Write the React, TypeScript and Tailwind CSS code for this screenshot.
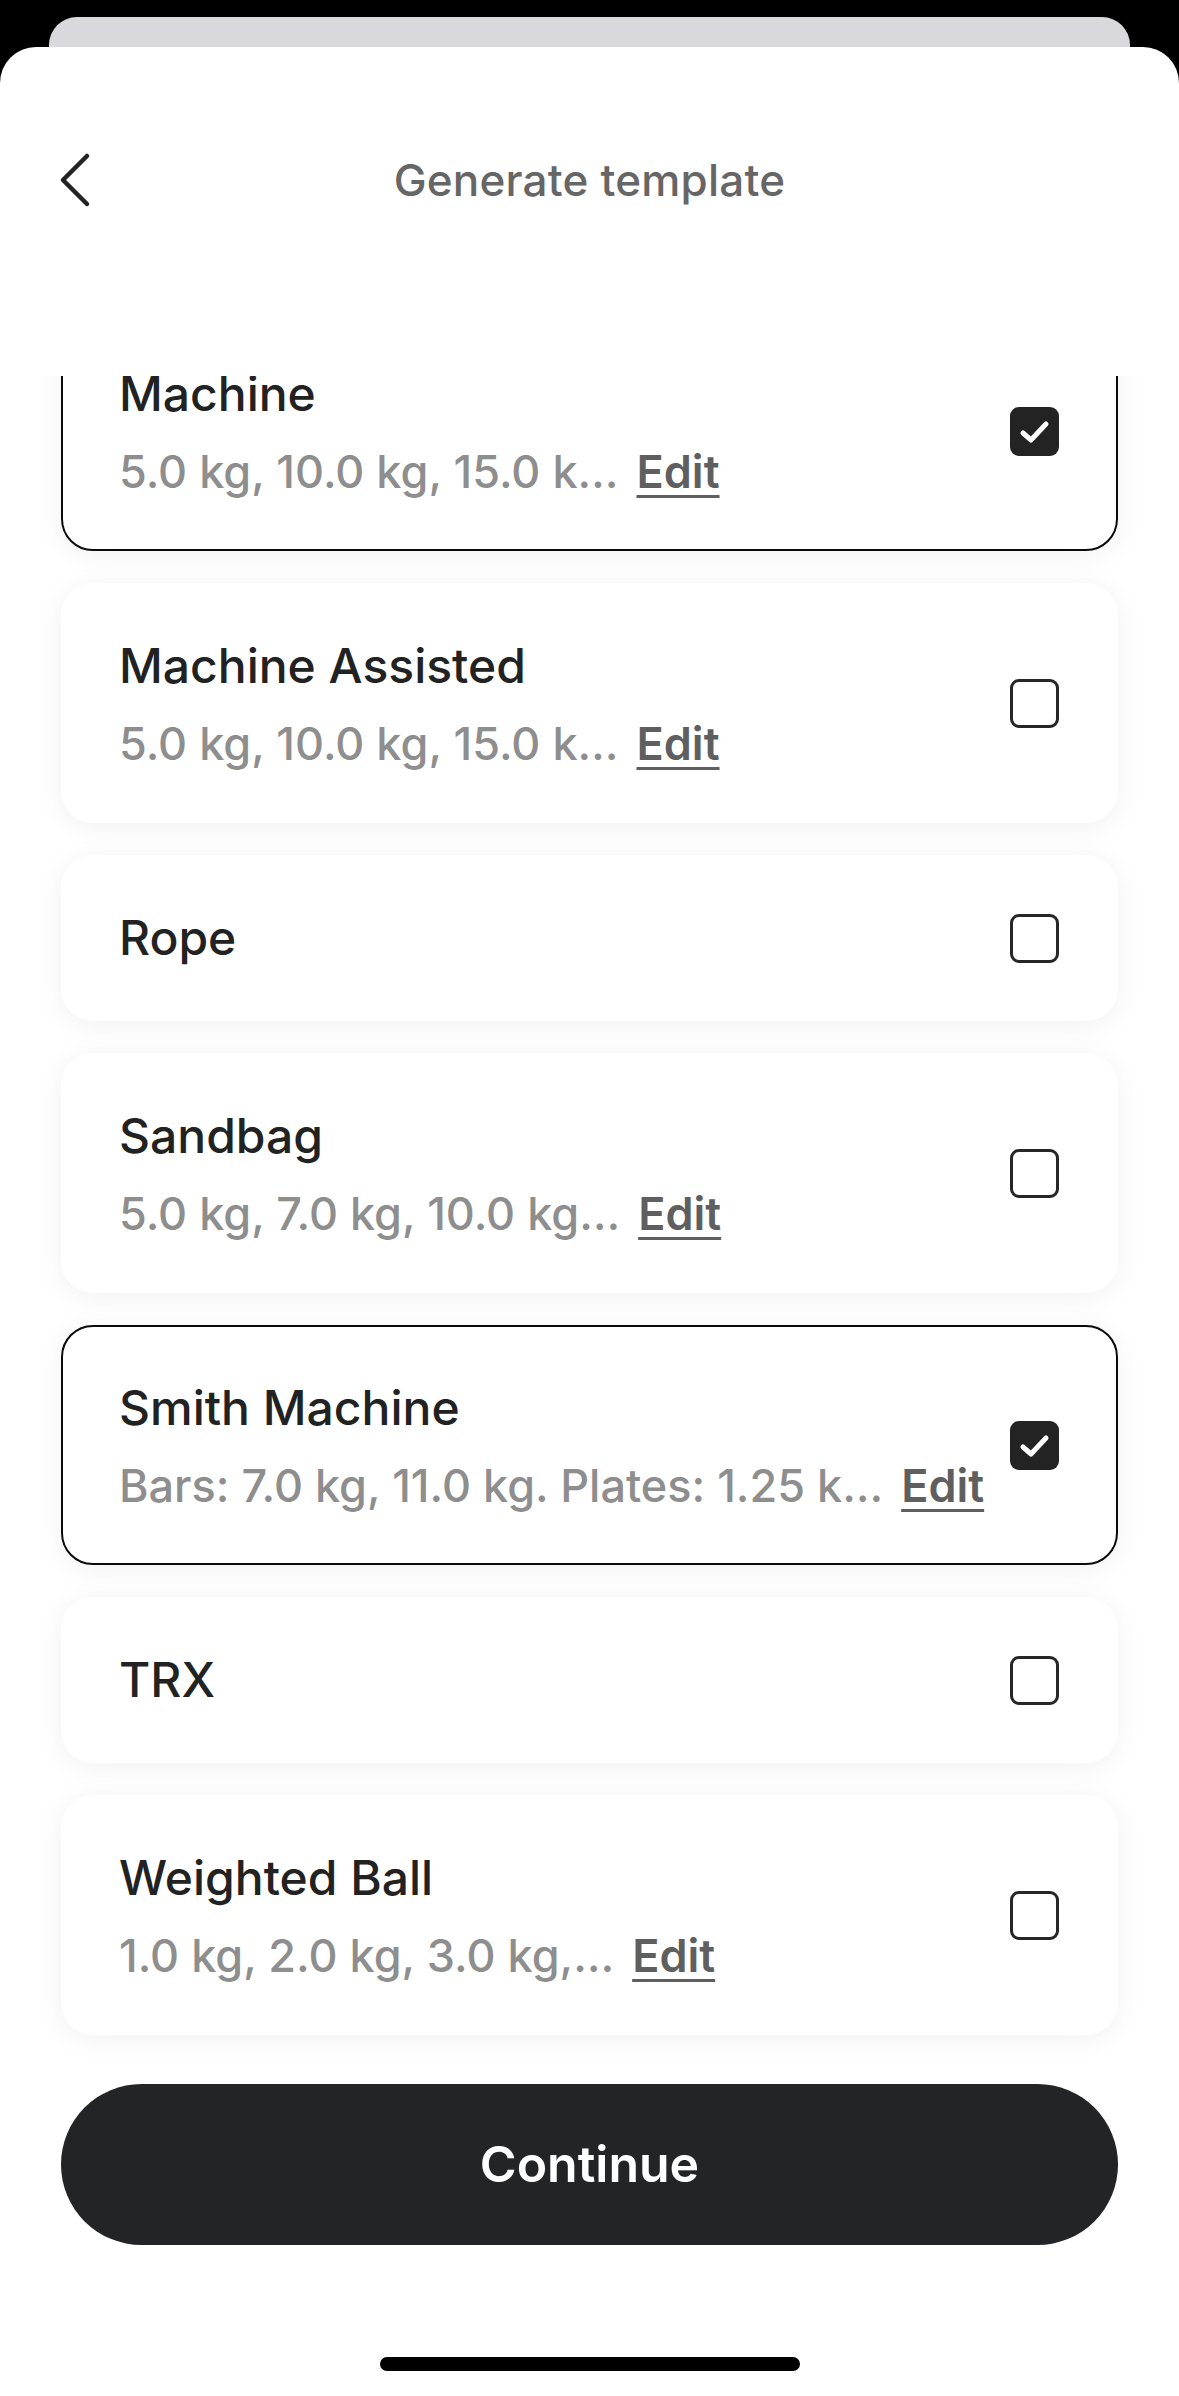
import React, { useState } from "react";

type Equipment = {
  name: string;
  detail?: string;
  checked: boolean;
};

const INITIAL_ITEMS: Equipment[] = [
  { name: "Machine", detail: "5.0 kg, 10.0 kg, 15.0 k…", checked: true },
  { name: "Machine Assisted", detail: "5.0 kg, 10.0 kg, 15.0 k…", checked: false },
  { name: "Rope", checked: false },
  { name: "Sandbag", detail: "5.0 kg, 7.0 kg, 10.0 kg…", checked: false },
  { name: "Smith Machine", detail: "Bars: 7.0 kg, 11.0 kg. Plates: 1.25 k…", checked: true },
  { name: "TRX", checked: false },
  { name: "Weighted Ball", detail: "1.0 kg, 2.0 kg, 3.0 kg,…", checked: false },
];

function Checkbox({ checked }: { checked: boolean }) {
  if (checked) {
    return (
      <div className="w-[49px] h-[49px] rounded-[9px] bg-[#232323] flex items-center justify-center shrink-0">
        <svg width="49" height="49" viewBox="0 0 49 49" fill="none">
          <path
            d="M13 26 L21 33 L36 17"
            stroke="white"
            strokeWidth="5"
            strokeLinecap="round"
            strokeLinejoin="round"
          />
        </svg>
      </div>
    );
  }
  return <div className="w-[49px] h-[49px] rounded-[9px] border-[3.5px] border-[#262626] shrink-0" />;
}

function EquipmentCard({ item, onToggle, first }: { item: Equipment; onToggle: () => void; first?: boolean }) {
  return (
    <div
      onClick={onToggle}
      className={`flex items-center justify-between bg-white rounded-[32px] border-[2.5px] pl-[56px] pr-[57px] py-[51px] shadow-[0_4px_28px_rgba(0,0,0,0.06)] cursor-pointer ${
        item.checked ? "border-[#0a0a0a]" : "border-transparent"
      } ${first ? "-mt-[65px]" : ""}`}
    >
      <div className="flex flex-col gap-[22px] min-w-0">
        <span className="text-[48px] leading-[60px] font-medium text-[#222222]">{item.name}</span>
        {item.detail && (
          <div className="flex items-center text-[45px] leading-[52px] font-medium whitespace-nowrap">
            <span className="text-[#8e8e8e]">{item.detail}</span>
            <span className="ml-[18px] text-[#5f5f5f] font-semibold underline decoration-[3px] underline-offset-[7px]">
              Edit
            </span>
          </div>
        )}
      </div>
      <Checkbox checked={item.checked} />
    </div>
  );
}

export default function App() {
  const [items, setItems] = useState<Equipment[]>(INITIAL_ITEMS);

  const toggle = (idx: number) => {
    setItems((prev) => prev.map((it, i) => (i === idx ? { ...it, checked: !it.checked } : it)));
  };

  return (
    <div className="w-[1179px] h-[2396px] bg-black overflow-hidden font-['Inter',sans-serif]">
      {/* card peeking behind the sheet */}
      <div className="mx-[49px] mt-[17px] h-[60px] rounded-t-[28px] bg-[#d9d9dd]" />

      {/* sheet */}
      <div className="-mt-[30px] h-[2349px] bg-white rounded-t-[36px] flex flex-col">
        {/* header */}
        <div className="h-[329px] pt-[83px] shrink-0">
          <div className="relative h-[100px] flex items-center justify-center">
            <button className="absolute left-[58px] top-1/2 -translate-y-1/2 p-0">
              <svg width="34" height="56" viewBox="0 0 34 56" fill="none">
                <path
                  d="M29 4 L5 28 L29 52"
                  stroke="#222222"
                  strokeWidth="4.5"
                  strokeLinecap="round"
                  strokeLinejoin="round"
                />
              </svg>
            </button>
            <h1 className="text-[44px] font-medium text-[#666666] tracking-[0.2px]">Generate template</h1>
          </div>
        </div>

        {/* scrollable list */}
        <div className="h-[1684px] overflow-hidden shrink-0">
          <div className="flex flex-col gap-[32px] px-[61px]">
            {items.map((item, i) => (
              <EquipmentCard key={item.name} item={item} first={i === 0} onToggle={() => toggle(i)} />
            ))}
          </div>
        </div>

        {/* footer */}
        <div className="px-[61px] pt-[24px] shrink-0">
          <button className="w-full h-[161px] rounded-full bg-[#232426] text-white text-[50px] font-semibold flex items-center justify-center">
            Continue
          </button>
        </div>
        <div className="mt-[112px] flex justify-center">
          <div className="w-[420px] h-[14px] rounded-full bg-black" />
        </div>
      </div>
    </div>
  );
}
